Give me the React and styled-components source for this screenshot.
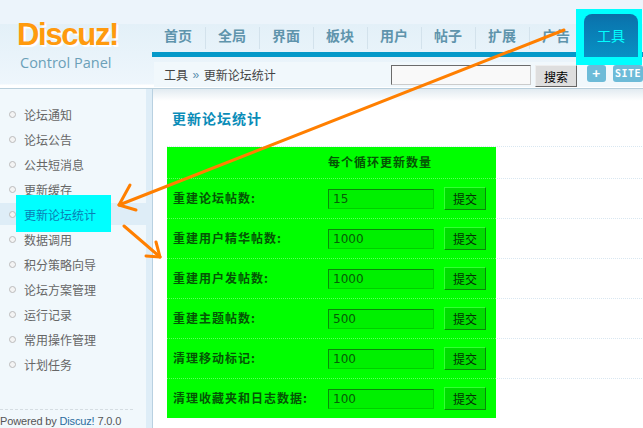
import styled, { createGlobalStyle } from 'styled-components'

const CJK = `'Noto Sans CJK SC', 'Liberation Sans', sans-serif`

const GlobalStyle = createGlobalStyle`
	html, body {
		margin: 0;
		padding: 0;
		background: #fff;
	}
`

const Page = styled.div`
	position: relative;
	width: 643px;
	height: 428px;
	overflow: hidden;
	font-family: ${CJK};
	font-size: 12px;
`

const Header = styled.header`
	display: flex;
	height: 88px;
	border-bottom: 1px solid #b9cfdc;
	background: linear-gradient(#ecf4fb 0, #ecf4fb 24px, #e3f0f8 24px, #eef6fc 84px, #fff 85px);
`

const Brand = styled.div`
	display: flex;
	flex-direction: column;
	width: 152px;
	flex-shrink: 0;
	padding: 17px 0 0 17px;
	box-sizing: border-box;
`

const LogoWord = styled.div`
	font-family: 'Liberation Sans', sans-serif;
	font-size: 31px;
	line-height: 36px;
	font-weight: 700;
	letter-spacing: -1.3px;
	color: #ff9a0e;
	text-shadow: 1px 1px 0 #fff, 2px 2px 1px #fff;
`

const LogoSub = styled.div`
	margin: 0 0 0 3px;
	font-family: 'Open Sans', sans-serif;
	font-size: 14.5px;
	line-height: 20px;
	color: #6ba0b8;
`

const HeaderRight = styled.div`
	flex: 1;
	display: flex;
	flex-direction: column;
	min-width: 0;
`

const Nav = styled.nav`
	display: flex;
	height: 38px;
	margin-top: 14px;
`

const Tab = styled.a`
	display: flex;
	align-items: center;
	justify-content: center;
	box-sizing: border-box;
	width: 54px;
	height: 38px;
	padding: 4px 2px 0 0;
	font-size: 14px;
	font-weight: 700;
	color: #5f94ac;
	background: ${(p) =>
		p.$last ? 'none' : 'linear-gradient(#d3e2ec, #d3e2ec) right 13px / 1px 22px no-repeat'};
`

const ActiveTab = styled.a`
	position: relative;
	z-index: 2;
	display: flex;
	justify-content: center;
	box-sizing: border-box;
	width: 54px;
	height: 43px;
	padding-top: 11px;
	font-size: 14px;
	color: #0ff;

	&::before {
		content: '';
		position: absolute;
		z-index: -2;
		top: -5px;
		left: -8px;
		width: 66px;
		height: 56px;
		background: #0ff;
	}

	&::after {
		content: '';
		position: absolute;
		z-index: -1;
		inset: 0;
		border-radius: 8px 8px 0 0;
		background: linear-gradient(#0b6ea6 0, #0a77b0 8px, #0891c4 100%);
	}
`

const NavBar = styled.div`
	height: 5px;
	background: #0599c9;
`

const Crumbs = styled.div`
	display: flex;
	align-items: center;
	height: 25px;
	margin: 5px 0 1px 2px;
	padding-left: 10px;
	background: #f1f8fc;
	color: #444;
`

const CrumbSep = styled.span`
	margin: 0 4.5px;
	color: #5b8fb0;
	font-family: 'Liberation Sans', sans-serif;
`

const SearchBox = styled.input`
	width: 140px;
	height: 20px;
	box-sizing: border-box;
	margin: 1px 4px 0 auto;
	padding: 0;
	border: 1px solid;
	border-color: #6b6b6b #ccc #ccc #6b6b6b;
	background: #f9f9f9;
`

const SearchButton = styled.button`
	width: 42px;
	height: 22px;
	box-sizing: border-box;
	margin-top: 3px;
	padding: 0;
	border: 1px solid;
	border-color: #eee #666 #666 #eee;
	background: #dedede;
	color: #000;
	font-family: ${CJK};
	font-size: 12px;
`

const SmallBtn = styled.span`
	display: flex;
	align-items: center;
	justify-content: center;
	flex-shrink: 0;
	box-sizing: border-box;
	width: ${(p) => p.$w}px;
	height: 17px;
	margin: -2px 0 0 ${(p) => p.$gap}px;
	border-radius: 3px;
	background: #6dbbd8;
	color: #fff;
	font-family: 'DejaVu Sans Mono', monospace;
	font-size: ${(p) => p.$size}px;
	font-weight: 700;
	letter-spacing: 0.5px;
	white-space: nowrap;
`

const Body = styled.div`
	display: flex;
	height: 339px;
`

const Sidebar = styled.aside`
	display: flex;
	flex-direction: column;
	width: 152px;
	flex-shrink: 0;
	padding-top: 14px;
	box-sizing: border-box;
	border-right: 6px solid #deedf7;
	background: #f1f8fc;
	box-shadow: 1px 0 0 #b9d1e1;
`

const SideList = styled.ul`
	display: flex;
	flex-direction: column;
	gap: 3px;
	margin: 0;
	padding: 0;
	list-style: none;
`

const SideItem = styled.li`
	position: relative;
	display: flex;
	align-items: center;
	gap: 8px;
	height: 22px;
	padding-left: 9px;
	color: ${(p) => (p.$active ? '#0a7fb5' : '#666')};
	background: ${(p) => (p.$active ? '#deedf7' : 'transparent')};

	${(p) =>
		p.$active &&
		`
		&::before {
			content: '';
			position: absolute;
			top: -8px;
			left: 16px;
			width: 95px;
			height: 37px;
			background: #0ff;
		}
	`}
`

const Bullet = styled.i`
	width: 7px;
	height: 7px;
	box-sizing: border-box;
	border: 1.5px solid #bbb;
	border-radius: 50%;
	background: #f4f4f4;
`

const SideLabel = styled.span`
	position: relative;
`

const SideFoot = styled.div`
	margin-top: auto;
	width: 133px;
	height: 18px;
	border-top: 1px dashed #d5dde2;
	font-family: 'Liberation Sans', sans-serif;
	font-size: 11px;
	line-height: 22px;
	letter-spacing: -0.15px;
	color: #555;
	white-space: nowrap;
`

const FootLink = styled.span`
	color: #2a6c9e;
`

const Main = styled.main`
	flex: 1;
	margin-left: 1px;
	padding: 0 0 0 14px;
	background: linear-gradient(#e2ebf1 0, #fff 12px);
`

const Title = styled.h1`
	height: 57px;
	margin: 0;
	padding: 19px 0 0 5px;
	box-sizing: border-box;
	font-size: 14px;
	line-height: 20px;
	font-weight: 700;
	letter-spacing: 1px;
	color: #0a8cb8;
`

const Row = styled.div`
	display: flex;
	height: ${(p) => p.$h}px;
	box-sizing: border-box;
	border-top: 1px dotted #d9e7f1;
	width: 475px;
`

const GreenCell = styled.div`
	display: flex;
	align-items: center;
	width: 329px;
	box-sizing: border-box;
	padding-left: 6px;
	margin-top: ${(p) => (p.$first ? 0 : -1)}px;
	border-top: ${(p) => (p.$first ? 0 : '1px dotted #5cff5c')};
	background: #0f0;
	color: #055505;
`

const HeadLabel = styled.b`
	margin-left: 155px;
	padding-bottom: 2px;
	letter-spacing: 1px;
`

const RowLabel = styled.label`
	width: 155px;
	flex-shrink: 0;
	padding-bottom: 2px;
	font-weight: 700;
	letter-spacing: 1px;
`

const CountInput = styled.input`
	width: 106px;
	height: 20px;
	box-sizing: border-box;
	padding: 0 0 0 4px;
	border: 1px solid;
	border-color: #0a8a0a #00cf00 #00cf00 #0a8a0a;
	background: #00f000;
	color: #075c07;
	font-family: 'DejaVu Sans', sans-serif;
	font-size: 12px;
`

const SubmitButton = styled.button`
	width: 42px;
	height: 23px;
	box-sizing: border-box;
	margin-left: 10px;
	padding: 0;
	border: 1px solid;
	border-color: #3f3 #088a08 #088a08 #3f3;
	background: #00de00;
	color: #063006;
	font-family: ${CJK};
	font-size: 12px;
`

const Arrows = styled.svg`
	position: absolute;
	top: 0;
	left: 0;
	pointer-events: none;
`

const tabs = ['首页', '全局', '界面', '板块', '用户', '帖子', '扩展', '广告']

const sideItems = [
	'论坛通知',
	'论坛公告',
	'公共短消息',
	'更新缓存',
	'更新论坛统计',
	'数据调用',
	'积分策略向导',
	'论坛方案管理',
	'运行记录',
	'常用操作管理',
	'计划任务',
]

const rows = [
	{ label: '重建论坛帖数:', value: '15' },
	{ label: '重建用户精华帖数:', value: '1000' },
	{ label: '重建用户发帖数:', value: '1000' },
	{ label: '重建主题帖数:', value: '500' },
	{ label: '清理移动标记:', value: '100' },
	{ label: '清理收藏夹和日志数据:', value: '100' },
]

export default function App() {
	return (
		<Page>
			<GlobalStyle />
			<Header>
				<Brand>
					<LogoWord>Discuz!</LogoWord>
					<LogoSub>Control Panel</LogoSub>
				</Brand>
				<HeaderRight>
					<Nav>
						{tabs.map((tab, i) => (
							<Tab key={tab} $last={i === tabs.length - 1}>
								{tab}
							</Tab>
						))}
						<ActiveTab>工具</ActiveTab>
					</Nav>
					<NavBar />
					<Crumbs>
						工具
						<CrumbSep>»</CrumbSep>
						更新论坛统计
						<SearchBox />
						<SearchButton>搜索</SearchButton>
						<SmallBtn $w={19} $gap={10} $size={13}>
							+
						</SmallBtn>
						<SmallBtn $w={30} $gap={7} $size={10}>
							SITE
						</SmallBtn>
					</Crumbs>
				</HeaderRight>
			</Header>
			<Body>
				<Sidebar>
					<SideList>
						{sideItems.map((item) => (
							<SideItem key={item} $active={item === '更新论坛统计'}>
								<Bullet />
								<SideLabel>{item}</SideLabel>
							</SideItem>
						))}
					</SideList>
					<SideFoot>
						Powered by <FootLink>Discuz!</FootLink> 7.0.0
					</SideFoot>
				</Sidebar>
				<Main>
					<Title>更新论坛统计</Title>
					<Row $h={32}>
						<GreenCell $first>
							<HeadLabel>每个循环更新数量</HeadLabel>
						</GreenCell>
					</Row>
					{rows.map((row) => (
						<Row key={row.label} $h={40}>
							<GreenCell>
								<RowLabel>{row.label}</RowLabel>
								<CountInput defaultValue={row.value} />
								<SubmitButton>提交</SubmitButton>
							</GreenCell>
						</Row>
					))}
				</Main>
			</Body>
			<Arrows width="643" height="428" viewBox="0 0 643 428">
				<g fill="none" stroke="#ff7f00" strokeWidth="3" strokeLinecap="round" strokeLinejoin="round">
					<path d="M564 30 L119 205" />
					<path d="M130 185 L119 205 L136 210" />
					<path d="M124 226 L160 257" />
					<path d="M156 242 L160 257 L146 256" />
				</g>
			</Arrows>
		</Page>
	)
}
